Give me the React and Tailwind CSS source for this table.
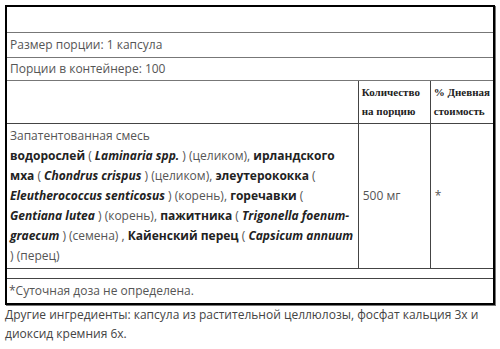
export default function App() {
  return (
    <div className="w-[500px] h-[349px] bg-white pt-[5px] px-[5px] overflow-hidden" style={{ fontFamily: '"Open Sans", sans-serif' }}>
      <table className="w-[490px] border-collapse border-2 border-black text-[12px] text-[#555] shadow-[1px_1px_0_#777]">
        <tbody>
          <tr>
            <td colSpan={3} className="h-[26px] border border-[#777]"></td>
          </tr>
          <tr>
            <td colSpan={3} className="border border-[#777] px-[3px] py-[2px] leading-[20px]">Размер порции: 1 капсула</td>
          </tr>
          <tr>
            <td colSpan={3} className="border border-[#777] px-[3px] py-[1px] leading-[20px]">Порции в контейнере: 100</td>
          </tr>
          <tr>
            <td className="border border-[#444] h-[42px]"></td>
            <td className="w-[72px] border border-[#444] px-[3px] py-[2px] align-top">
              <p className="font-bold text-[11px] leading-[19px] text-[#222] whitespace-nowrap" style={{ fontFamily: '"Liberation Serif", serif' }}>Количество<br />на порцию</p>
            </td>
            <td className="w-[63px] border border-[#444] px-[3px] py-[2px] align-top">
              <p className="font-bold text-[11px] leading-[19px] text-[#222] whitespace-nowrap" style={{ fontFamily: '"Liberation Serif", serif' }}>% Дневная<br />стоимость</p>
            </td>
          </tr>
          <tr>
            <td className="border border-[#444] px-[3px] py-[2px] leading-[20px]">
              Запатентованная смесь
              <br />
              <b className="text-[#222]">водорослей</b> ( <b className="italic text-[#222]">Laminaria spp.</b> ) (целиком), <b className="text-[#222]">ирландского мха</b> ( <b className="italic text-[#222]">Chondrus crispus</b> ) (целиком), <b className="text-[#222]">элеутерококка</b> ( <b className="italic text-[#222]">Eleutherococcus senticosus</b> ) (корень), <b className="text-[#222]">горечавки</b> ( <b className="italic text-[#222]">Gentiana lutea</b> ) (корень), <b className="text-[#222]">пажитника</b> ( <b className="italic text-[#222]">Trigonella foenum-graecum</b> ) (семена) , <b className="text-[#222]">Кайенский перец</b> ( <b className="italic text-[#222]">Capsicum annuum</b> ) (перец)
            </td>
            <td className="border border-[#444] px-[4px] leading-[20px]">500 мг</td>
            <td className="border border-[#444] px-[4px] leading-[20px]">*</td>
          </tr>
          <tr>
            <td colSpan={3} className="h-[10px] border border-[#444]"></td>
          </tr>
          <tr>
            <td colSpan={3} className="border border-[#444] px-[2px] py-[2px] leading-[20px]">*Суточная доза не определена.</td>
          </tr>
        </tbody>
      </table>
      <p className="text-[12px] leading-[19px] text-[#444]">Другие ингредиенты: капсула из растительной целлюлозы, фосфат кальция 3х и диоксид кремния 6х.</p>
    </div>
  );
}
